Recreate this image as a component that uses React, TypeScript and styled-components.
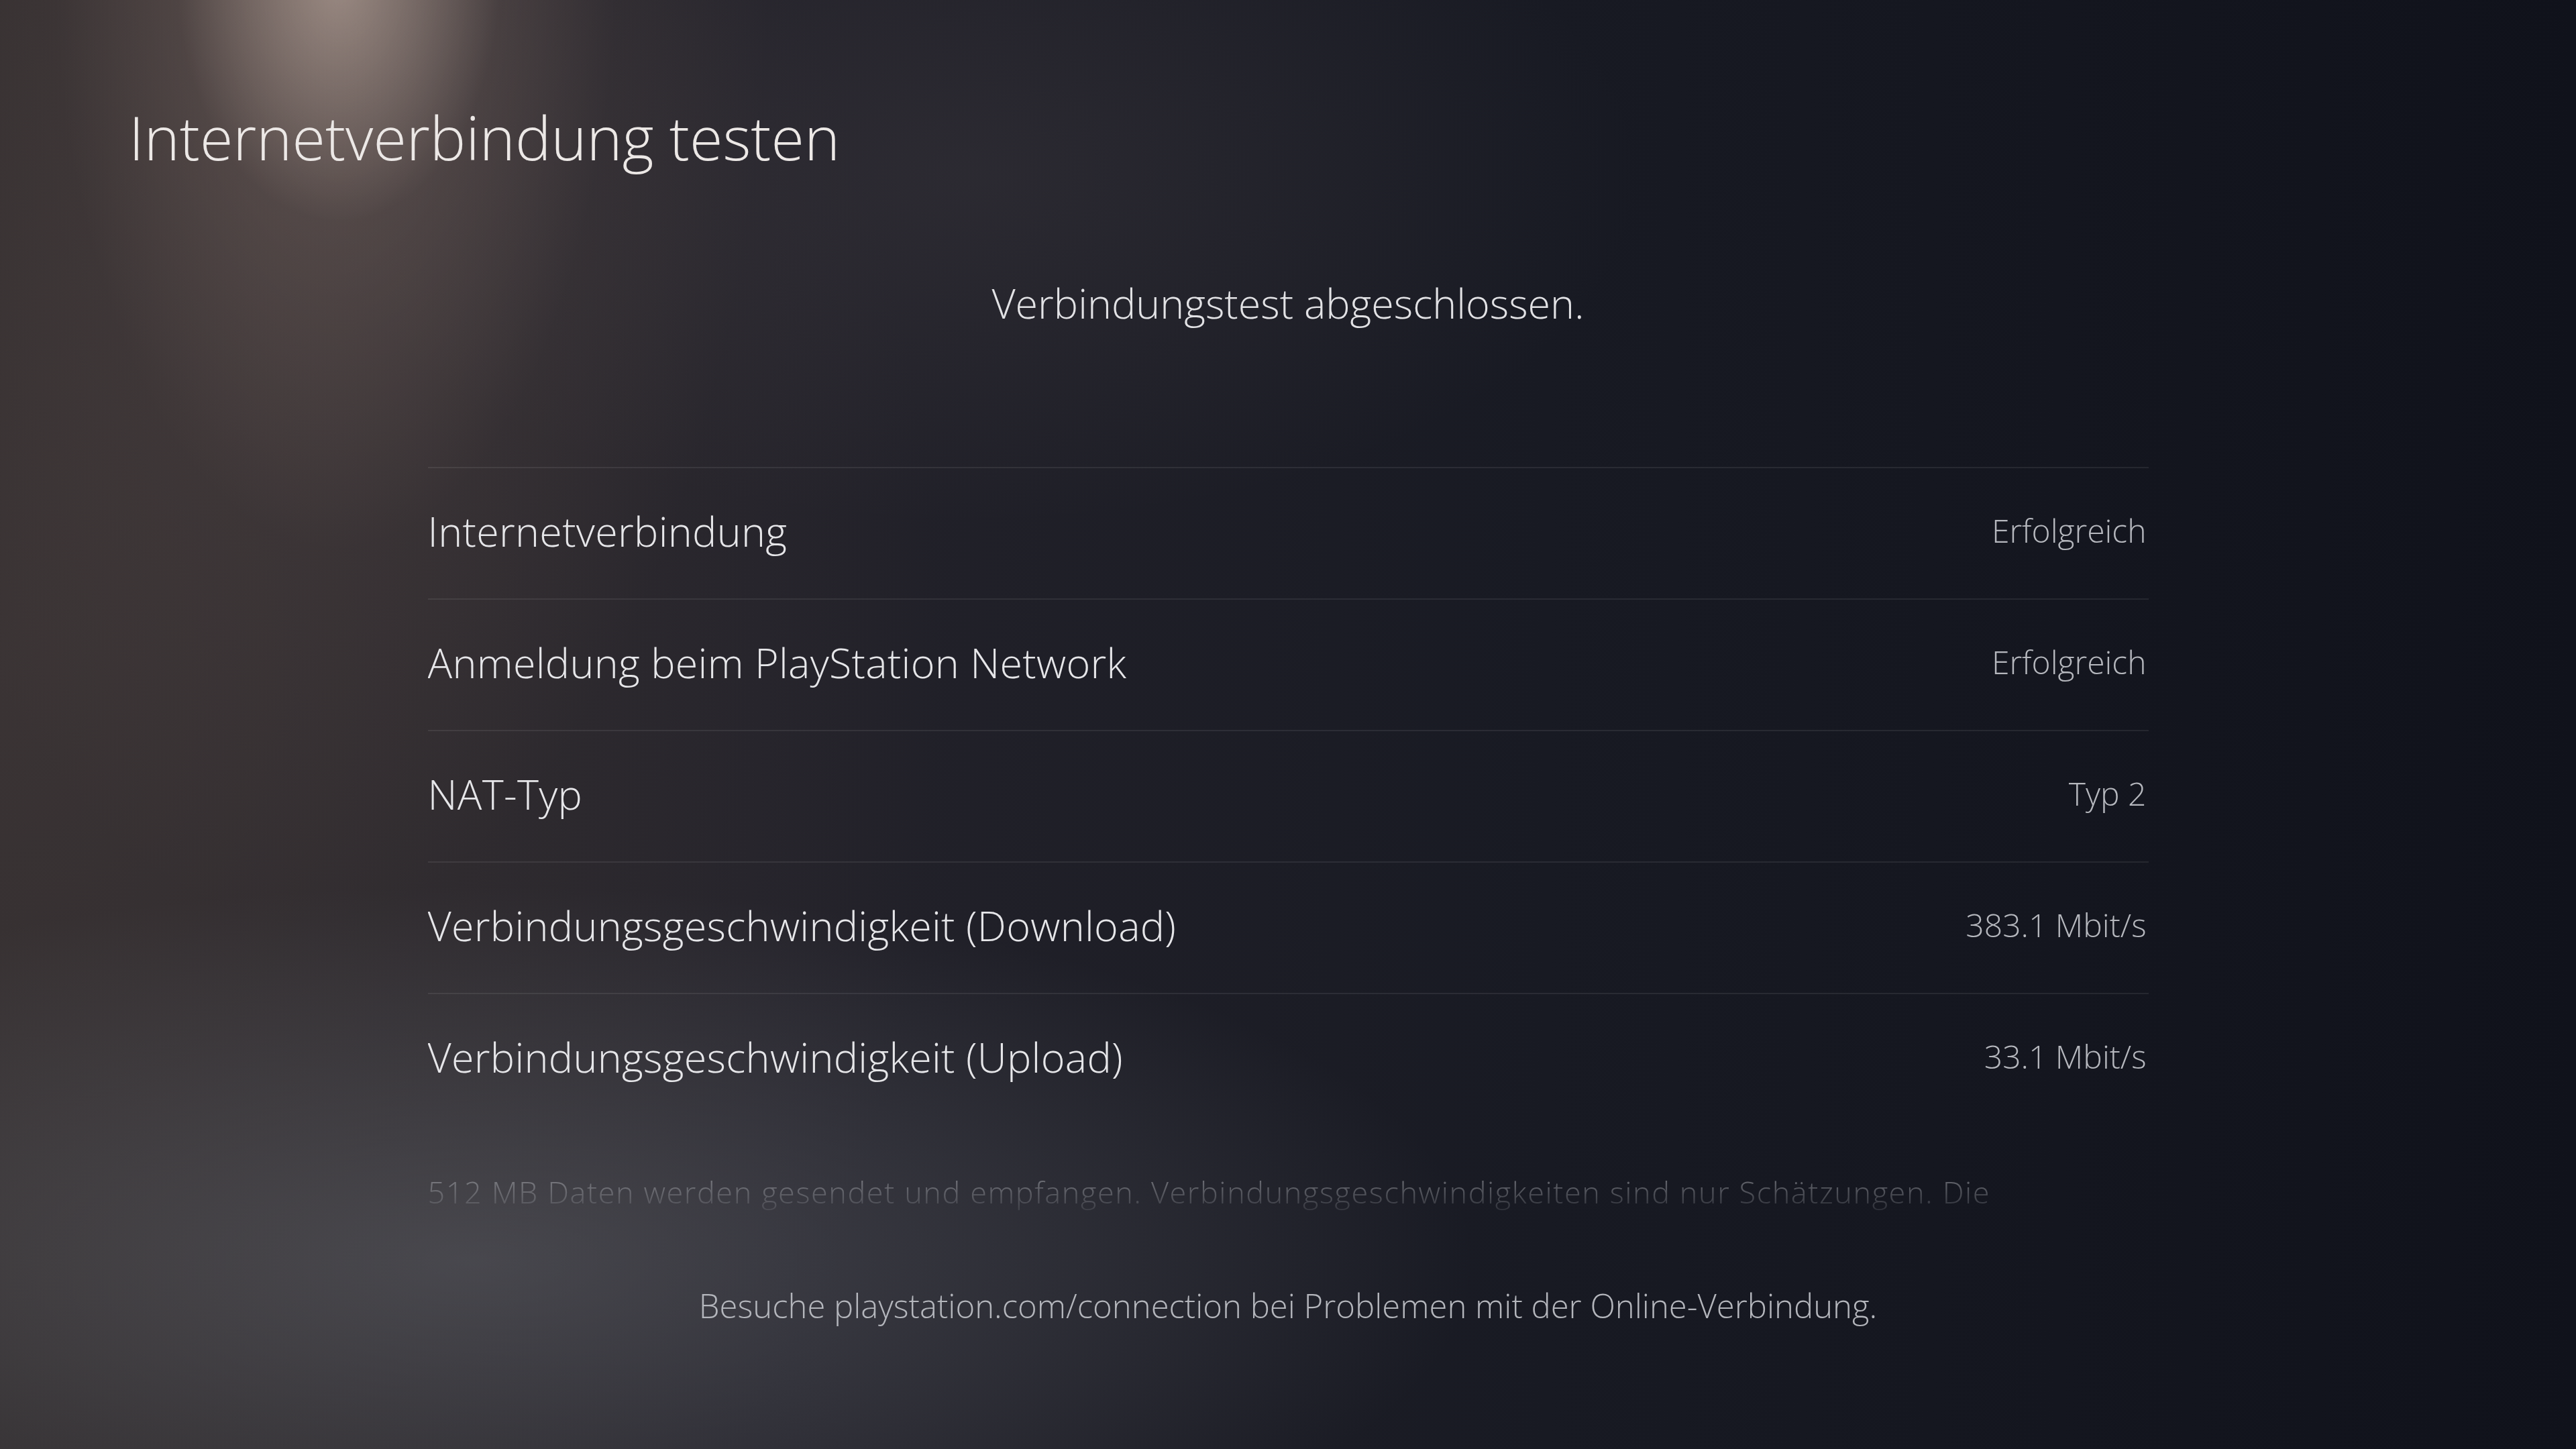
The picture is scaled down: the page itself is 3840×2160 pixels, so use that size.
import React from 'react';
import styled, { createGlobalStyle } from 'styled-components';

interface ResultRow {
  label: string;
  value: string;
}

const results: ResultRow[] = [
  { label: 'Internetverbindung', value: 'Erfolgreich' },
  { label: 'Anmeldung beim PlayStation Network', value: 'Erfolgreich' },
  { label: 'NAT-Typ', value: 'Typ 2' },
  { label: 'Verbindungsgeschwindigkeit (Download)', value: '383.1 Mbit/s' },
  { label: 'Verbindungsgeschwindigkeit (Upload)', value: '33.1 Mbit/s' },
];

const GlobalStyle = createGlobalStyle`
  html, body {
    margin: 0;
    padding: 0;
    background: #11131b;
  }
  body {
    font-family: "Open Sans", "Noto Sans", sans-serif;
    font-weight: 300;
    -webkit-font-smoothing: antialiased;
  }
`;

const Screen = styled.div`
  width: 3840px;
  height: 2160px;
  overflow: hidden;
  display: flex;
  flex-direction: column;
  background:
    radial-gradient(ellipse 240px 360px at 505px -30px, rgba(210, 190, 178, 0.5), rgba(210, 190, 178, 0) 100%),
    radial-gradient(ellipse 420px 900px at 500px -80px, rgba(160, 138, 128, 0.35), rgba(160, 138, 128, 0) 100%),
    radial-gradient(ellipse 700px 1500px at 450px -120px, rgba(120, 100, 94, 0.3), rgba(120, 100, 94, 0) 100%),
    radial-gradient(ellipse 1000px 520px at 1450px 260px, rgba(120, 110, 112, 0.13), rgba(120, 110, 112, 0) 100%),
    radial-gradient(ellipse 1500px 560px at 700px 1880px, rgba(118, 122, 130, 0.38), rgba(118, 122, 130, 0) 100%),
    radial-gradient(ellipse 1400px 1900px at 0px 1000px, rgba(72, 62, 62, 0.55), rgba(72, 62, 62, 0) 100%),
    linear-gradient(90deg, #2a2729 0%, #23222a 30%, #181a23 60%, #10121b 100%);
`;

const Header = styled.h1`
  margin: 0;
  padding: 159px 0 0 192px;
  font-size: 90px;
  line-height: 1;
  font-weight: 300;
  color: #ece8e6;
`;

const Content = styled.main`
  width: 2565px;
  margin: 0 auto;
  display: flex;
  flex-direction: column;
  align-items: center;
`;

const Status = styled.p`
  margin: 172px 0 0;
  font-size: 61px;
  line-height: 1;
  color: #e2e2e5;
`;

const ScrollArea = styled.div`
  margin-top: 214px;
  width: 100%;
  height: 1129px;
  overflow: hidden;
  -webkit-mask-image: linear-gradient(to bottom, #000 0, #000 calc(100% - 125px), transparent 100%);
  mask-image: linear-gradient(to bottom, #000 0, #000 calc(100% - 125px), transparent 100%);
`;

const List = styled.ul`
  list-style: none;
  margin: 0;
  padding: 0;
`;

const Row = styled.li`
  height: 196px;
  box-sizing: border-box;
  border-top: 2px solid rgba(255, 255, 255, 0.08);
  display: flex;
  align-items: center;
  justify-content: space-between;
  padding: 0 3px 8px 0;
`;

const Label = styled.span`
  font-size: 61px;
  line-height: 1;
  letter-spacing: 0.3px;
  color: #e6e6e9;
`;

const Value = styled.span`
  font-size: 48px;
  line-height: 1;
  color: #b6b8be;
`;

const Note = styled.p`
  margin: 68px 0 0;
  font-size: 45px;
  line-height: 1.45;
  letter-spacing: 1.6px;
  color: #a8aab0;
  white-space: nowrap;
`;

const Footer = styled.p`
  margin: 97px 0 0;
  font-size: 49px;
  line-height: 1;
  color: #b4b6bc;
  text-align: center;
`;

const App: React.FC = () => {
  return (
    <Screen>
      <GlobalStyle />
      <Header>Internetverbindung testen</Header>
      <Content>
        <Status>Verbindungstest abgeschlossen.</Status>
        <ScrollArea>
          <List>
            {results.map((row) => (
              <Row key={row.label}>
                <Label>{row.label}</Label>
                <Value>{row.value}</Value>
              </Row>
            ))}
          </List>
          <Note>
            512 MB Daten werden gesendet und empfangen. Verbindungsgeschwindigkeiten sind nur Schätzungen. Die
            <br />
            tatsächliche Geschwindigkeit kann je nach Netzwerkauslastung variieren.
          </Note>
        </ScrollArea>
        <Footer>Besuche playstation.com/connection bei Problemen mit der Online-Verbindung.</Footer>
      </Content>
    </Screen>
  );
};

export default App;
